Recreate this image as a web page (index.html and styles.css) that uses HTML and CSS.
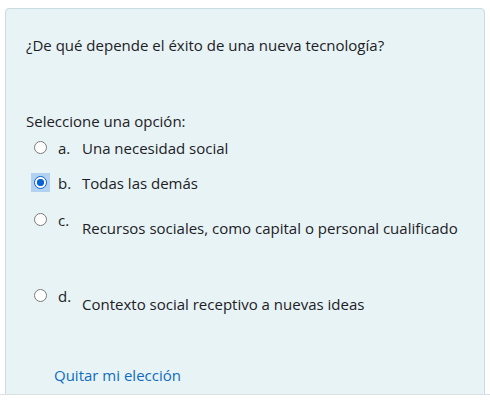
FILE: index.html
```html
<!DOCTYPE html>
<html lang="es">
<head>
<meta charset="utf-8">
<title>Pregunta</title>
<link rel="stylesheet" href="styles.css">
</head>
<body>
<div class="view">
  <div class="formulation">
    <div class="qtext">¿De qué depende el éxito de una nueva tecnología?</div>
    <div class="ablock">
      <div class="prompt">Seleccione una opción:</div>
      <div class="answer">
        <div class="r r-a">
          <span class="rwrap"><input type="radio" name="q" class="radio"></span>
          <span class="num">a.</span>
          <div class="txt">Una necesidad social</div>
        </div>
        <div class="r r-b">
          <span class="rwrap focus"><input type="radio" name="q" class="radio" checked></span>
          <span class="num">b.</span>
          <div class="txt">Todas las demás</div>
        </div>
        <div class="r r-c">
          <span class="rwrap"><input type="radio" name="q" class="radio"></span>
          <span class="num">c.</span>
          <div class="txt"><p>Recursos sociales, como capital o personal cualificado</p></div>
        </div>
        <div class="r r-d">
          <span class="rwrap"><input type="radio" name="q" class="radio"></span>
          <span class="num">d.</span>
          <div class="txt"><p>Contexto social receptivo a nuevas ideas</p></div>
        </div>
      </div>
      <a class="clear" href="#">Quitar mi elección</a>
    </div>
  </div>
</div>
</body>
</html>
```
FILE: styles.css
```css
html, body {
  margin: 0;
  padding: 0;
  background: #ffffff;
}
body {
  font-family: "Open Sans", "Noto Sans", sans-serif;
  font-size: 15px;
  line-height: 22px;
  color: #1d2125;
}
.view {
  height: 386px;
  overflow: hidden;
  padding: 8px 5px 0 5px;
  border-bottom: 1px solid #dcdfe2;
}
.formulation {
  background: #e7f3f5;
  border: 1px solid #c9dce1;
  border-radius: 4px;
  padding: 25px 20px 40px 20px;
  height: 600px;
}
.qtext {
  margin: 0;
}
.ablock {
  margin-top: 54px;
}
.prompt {
  margin-bottom: 5px;
}
.answer {
  padding-left: 8px;
}
.r {
  display: flex;
  align-items: flex-start;
}
.rwrap {
  width: 19px;
  height: 19px;
  margin: 1px 3px 0 -3px;
  display: flex;
  align-items: center;
  justify-content: center;
  flex: none;
}
.rwrap.focus {
  background: #b3d1f0;
}
.radio {
  appearance: none;
  -webkit-appearance: none;
  margin: 0;
  width: 13px;
  height: 13px;
  border: 1px solid #7a7a7a;
  border-radius: 50%;
  background: #ffffff;
  box-sizing: border-box;
}
.radio:checked {
  border: 1px solid #0a63d6;
  background: radial-gradient(circle, #0a63d6 0 3.4px, #ffffff 3.9px 100%);
}
.num {
  width: 24px;
  flex: none;
  margin-left: 5px;
}
.txt p {
  margin: 8px 0 0 0;
}
.r-a { margin-bottom: 13px; }
.r-b { margin-bottom: 15px; }
.r-c { margin-bottom: 46px; }
.r-d { margin-bottom: 49px; }
.clear {
  display: inline-block;
  margin-left: 28px;
  color: #0f6cbf;
  text-decoration: none;
}
```
